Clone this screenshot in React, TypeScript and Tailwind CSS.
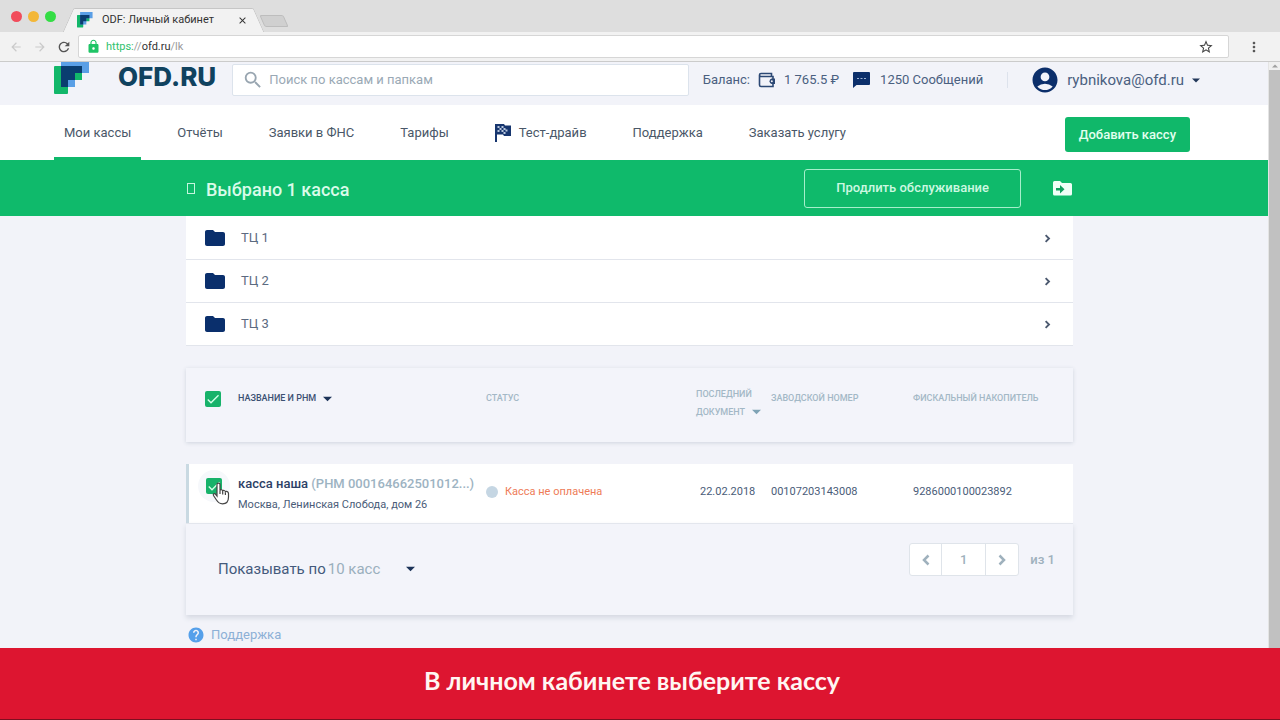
import React from 'react';
import {
  MdAccountCircle,
  MdArrowBack,
  MdArrowForward,
  MdCheck,
  MdClose,
  MdFolder,
  MdHelp,
  MdLock,
  MdMoreVert,
  MdRefresh,
  MdSearch,
  MdStarBorder,
} from 'react-icons/md';

const navItems = [
  { title: 'Мои кассы', active: true },
  { title: 'Отчёты' },
  { title: 'Заявки в ФНС' },
  { title: 'Тарифы' },
  { title: 'Тест-драйв', flag: true },
  { title: 'Поддержка' },
  { title: 'Заказать услугу' },
];

const folders = ['ТЦ 1', 'ТЦ 2', 'ТЦ 3'];

const LogoMark: React.FC<{ className: string; viewBox: string }> = ({ className, viewBox }) => (
  <svg className={className} viewBox={viewBox} aria-hidden="true">
    <path d="M1 4H28V18H14V31a1 1 0 0 1-1 1H1a1 1 0 0 1-1-1V5a1 1 0 0 1 1-1Z" fill="#12b76a" />
    <path d="M7-3H35V11H21V25H7Z" fill="#5a9fe6" />
    <path d="M7 4H28V11H21V18H14V25H7Z" fill="#0a3d70" />
  </svg>
);

const Caret: React.FC<{ className: string }> = ({ className }) => (
  <svg className={className} viewBox="0 0 10 6" aria-hidden="true">
    <path d="M0 0.5H10L5 5.5Z" fill="currentColor" />
  </svg>
);

const Chevron: React.FC<{ className: string; left?: boolean }> = ({ className, left }) => (
  <svg className={className} viewBox="0 0 8 12" fill="none" aria-hidden="true">
    <path d={left ? 'M6.5 1.5L2 6L6.5 10.5' : 'M1.5 1.5L6 6L1.5 10.5'} stroke="currentColor" strokeWidth="2.5" />
  </svg>
);

const WalletIcon = () => (
  <svg className="h-4 w-[18px]" viewBox="0 0 18 16" fill="none" aria-hidden="true">
    <path d="M1.5 3V13a1.5 1.5 0 0 0 1.5 1.5H15V4.5H3a1.5 1.5 0 0 1 0-3H13.5V4" stroke="#2c4874" strokeWidth="1.6" />
    <path d="M17 6.5H13.5a2.900 2.900 0 0 0 0 5.500H17Z" fill="#2c4874" />
    <circle cx="13.800" cy="9.200" r="1" fill="#f2f3f9" />
  </svg>
);

const MessageIcon = () => (
  <svg className="h-4 w-[17px]" viewBox="0 0 17 16" aria-hidden="true">
    <path d="M1 0H16a1 1 0 0 1 1 1V12a1 1 0 0 1-1 1H3.500L0 16V1a1 1 0 0 1 1-1Z" fill="#0c2f6b" />
    <path d="M4 6.500H6M7.500 6.500H9.500M11 6.500H13" stroke="#9fb4d4" strokeWidth="1.200" />
  </svg>
);

const FlagIcon = () => (
  <svg className="h-[18px] w-4" viewBox="0 0 16 18" aria-hidden="true">
    <path d="M0 0H9L10 1.500H16V12H9L8 10.500H2V18H0Z" fill="#17366f" />
    <path
      d="M2.500 2h2v2h-2zM6.500 2h2v2h-2zM4.500 4h2v2h-2zM8.500 4h2v2h-2zM2.500 6h2v2h-2zM6.500 6h2v2h-2zM10.500 5.500h2v2h-2zM8.500 8h2v2h-2z"
      fill="#b9c7de"
    />
  </svg>
);

const MoveFolderIcon = () => (
  <svg className="h-[15px] w-[19px]" viewBox="0 0 19 15" aria-hidden="true">
    <path d="M1.500 0H7L9 2H17.500A1.500 1.500 0 0 1 19 3.500V13A1.500 1.500 0 0 1 17.500 14.500H1.500A1.500 1.500 0 0 1 0 13V1.500A1.500 1.500 0 0 1 1.500 0Z" fill="#effff7" />
    <path d="M3 7H7V4L11.500 8.300L7 12.500V9.600H3Z" fill="#0f9f5d" />
  </svg>
);

const HandCursor = () => (
  <svg className="h-[23px] w-[18px]" viewBox="0 0 18 23" aria-hidden="true">
    <path
      d="M5 14V2.500C5 .6 8 .6 8 2.500V8.500C8.300 7.300 10.600 7.500 10.700 9C11.200 8 13.300 8.300 13.400 9.800C14.200 9 16.500 9.500 16.500 11.500V15C16.500 19.500 14 21.800 10.500 21.800C7.500 21.800 6 20.500 4.500 18L1.500 13.500C.7 12 2.500 11 3.600 12.300Z"
      fill="#fff"
      stroke="#444"
      strokeWidth="1.200"
    />
    <path d="M8 8.500V12M10.700 9.500V12.500M13.400 10.500V13" stroke="#444" strokeWidth="1.200" />
  </svg>
);

const GreenCheckbox: React.FC<{ label: string }> = ({ label }) => (
  <span className="grid h-4 w-4">
    <input
      type="checkbox"
      defaultChecked
      aria-label={label}
      className="col-start-1 row-start-1 h-4 w-4 appearance-none rounded-xs bg-[#17b26a]"
    />
    <MdCheck className="pointer-events-none col-start-1 row-start-1 h-4 w-4 text-[#d5ffe9]" />
  </span>
);

const BrowserBar = () => (
  <header>
    <div className="flex h-8 items-end bg-[#dedede]">
      <div className="flex h-8 items-center gap-[6px] pl-[11px]">
        <span className="h-[11px] w-[11px] rounded-full bg-[#f14c5b]" />
        <span className="h-[11px] w-[11px] rounded-full bg-[#f3b738]" />
        <span className="h-[11px] w-[11px] rounded-full bg-[#34dd45]" />
      </div>
      <div className="relative ml-3 flex h-6 w-[190px] items-center">
        <span className="absolute inset-y-0 left-0 w-3/4 -skew-x-[24deg] rounded-tl-xs border-t border-l border-[#c6c6c6] bg-[#f2f2f2]" />
        <span className="absolute inset-y-0 right-0 w-3/4 skew-x-[24deg] rounded-tr-xs border-t border-r border-[#c6c6c6] bg-[#f2f2f2]" />
        <div className="relative flex w-full items-center pr-[10px] pl-[9px]">
          <LogoMark className="h-4 w-4" viewBox="0 -3 36 36" />
          <span className="ml-[9px] flex-1 text-[11px] text-[#333]">ODF: Личный кабинет</span>
          <button type="button" aria-label="Закрыть вкладку">
            <MdClose className="h-[11px] w-[11px] text-[#333]" />
          </button>
        </div>
      </div>
      <span className="mb-[5px] ml-1 h-3 w-6 skew-x-[24deg] rounded-xs border border-[#bdbdbd] bg-[#d0d0d0]" />
    </div>
    <div className="flex h-[30px] items-center border-b border-[#cbcbcb] bg-[#f2f2f2] pr-[18px] pl-[9px]">
      <button type="button" aria-label="Назад">
        <MdArrowBack className="h-[14px] w-[14px] text-[#cacaca]" />
      </button>
      <button type="button" aria-label="Вперёд" className="ml-[10px]">
        <MdArrowForward className="h-[14px] w-[14px] text-[#cacaca]" />
      </button>
      <button type="button" aria-label="Обновить" className="ml-[9px]">
        <MdRefresh className="h-4 w-4 text-[#555]" />
      </button>
      <div className="ml-[6px] flex h-[23px] flex-1 items-center rounded-xs border border-[#d6d6d6] bg-white pr-[14px] pl-[7px]">
        <MdLock className="h-[15px] w-[15px] text-[#1fc466]" />
        <p className="ml-[5px] flex-1 pt-[2px] text-[11px] text-[#9a9a9a]">
          <span className="text-[#2fc26e]">https:</span>//<span className="text-[#333]">ofd.ru</span>/lk
        </p>
        <MdStarBorder className="h-4 w-4 text-[#444]" />
      </div>
      <button type="button" aria-label="Меню" className="ml-[17px]">
        <MdMoreVert className="h-4 w-4 text-[#555]" />
      </button>
    </div>
  </header>
);

const AccountHeader = () => (
  <div className="flex h-[43px] items-start bg-[#f2f3f9] pr-[68px] pl-[54px]">
    <LogoMark className="h-8 w-9" viewBox="0 0 36 32" />
    <span className="ml-7 font-[Inter] text-[26px] leading-[30px] font-extrabold text-[#10425f]">OFD.RU</span>
    <div className="mt-[2px] ml-4 flex h-8 flex-1 items-center rounded-xs border border-[#dce3ec] bg-white pl-[9px]">
      <MdSearch className="h-[22px] w-[22px] text-[#98a5b0]" />
      <input
        type="search"
        aria-label="Поиск"
        placeholder="Поиск по кассам и папкам"
        className="ml-[5px] flex-1 text-[13px] outline-none placeholder:text-[#9aa9b5]"
      />
    </div>
    <div className="mt-[2px] ml-[14px] flex h-8 items-center text-[13px] whitespace-nowrap text-[#4a6080]">
      <span className="mr-2">Баланс:</span>
      <WalletIcon />
      <span className="ml-2">1 765.5 ₽</span>
      <span className="ml-[14px]">
        <MessageIcon />
      </span>
      <span className="ml-[10px]">1250 Сообщений</span>
      <span className="ml-6 h-4 w-px bg-[#dde2ec]" />
      <MdAccountCircle className="ml-[22px] h-[30px] w-[30px] text-[#0c2f6b]" />
      <button type="button" className="ml-[7px] flex items-center gap-2 text-[15px]">
        rybnikova@ofd.ru
        <Caret className="h-[5px] w-2 text-[#22375a]" />
      </button>
    </div>
  </div>
);

const MainNav = () => (
  <div className="flex h-[55px] items-stretch justify-between bg-white pr-[78px] pl-[54px]">
    <nav className="flex gap-[26px]">
      {navItems.map((item) => (
        <a
          key={item.title}
          href="#"
          className={
            item.active
              ? 'flex items-center gap-2 border-b-[3px] border-[#0fb96b] px-[10px] pt-[3px] text-[13px] text-[#4a5768]'
              : 'flex items-center gap-2 border-b-[3px] border-transparent px-[10px] pt-[3px] text-[13px] text-[#4a5768]'
          }
        >
          {item.flag && <FlagIcon />}
          {item.title}
        </a>
      ))}
    </nav>
    <button type="button" className="mt-3 h-[35px] rounded-[3px] bg-[#10b86a] px-[14px] text-[13px] font-medium text-[#e2ffef]">
      Добавить кассу
    </button>
  </div>
);

const SelectionBar = () => (
  <div className="h-14 bg-[#0fba6b] pr-[9px]">
    <div className="mx-auto flex h-14 max-w-[887px] items-center">
      <span className="ml-px h-[11px] w-2 border border-[#c5f5de]" />
      <h1 className="ml-[11px] flex-1 pt-[2px] text-[18px] font-medium text-[#d9fbe9]">Выбрано 1 касса</h1>
      <button
        type="button"
        className="h-[39px] rounded-[3px] border border-[#a5efcb] px-[31px] text-[13px] font-medium text-[#ccf8e1]"
      >
        Продлить обслуживание
      </button>
      <button type="button" aria-label="Переместить в папку" className="mr-px ml-8">
        <MoveFolderIcon />
      </button>
    </div>
  </div>
);

const CashTable = () => (
  <table className="-mb-[22px] w-full table-fixed border-separate border-spacing-x-0 border-spacing-y-[22px] text-left">
    <colgroup>
      <col className="w-[52px]" />
      <col className="w-[248px]" />
      <col />
      <col className="w-[75px]" />
      <col className="w-[142px]" />
      <col className="w-[160px]" />
    </colgroup>
    <thead>
      <tr className="h-[74px] bg-[#f3f4fa] text-[9px] text-[#a3b8c6] shadow-[0_1px_4px_#cfd4de]">
        <th className="pb-3 pl-[19px]">
          <GreenCheckbox label="Выбрать все" />
        </th>
        <th className="pb-3 font-medium text-[#3b5073]">
          <span className="flex items-center gap-[7px]">
            НАЗВАНИЕ И РНМ
            <Caret className="h-[6px] w-[9px] text-[#1c3358]" />
          </span>
        </th>
        <th className="pb-3 font-medium">СТАТУС</th>
        <th className="pb-1 leading-[18px] font-medium">
          ПОСЛЕДНИЙ
          <span className="flex items-center gap-[7px]">
            ДОКУМЕНТ
            <Caret className="h-[6px] w-[9px] text-[#7fa3b5]" />
          </span>
        </th>
        <th className="pb-3 font-medium">ЗАВОДСКОЙ НОМЕР</th>
        <th className="pb-3 font-medium">ФИСКАЛЬНЫЙ НАКОПИТЕЛЬ</th>
      </tr>
    </thead>
    <tbody>
      <tr className="h-[59px] bg-white text-[11px] text-[#4a5c78]">
        <td className="border-l-[3px] border-[#c9d9e2] pb-4 pl-[9px]">
          <div className="relative">
            <div className="grid h-8 w-8 place-items-center rounded-full bg-[#f6f8fb]">
              <GreenCheckbox label="касса наша" />
            </div>
            <div className="pointer-events-none absolute top-3 left-[14px]">
              <HandCursor />
            </div>
          </div>
        </td>
        <td className="whitespace-nowrap">
          <p className="text-[13px] leading-[21px] font-medium text-[#2d4166]">
            касса наша <span className="text-[#9db3c2]">(РНМ 000164662501012...)</span>
          </p>
          <p className="leading-[21px]">Москва, Ленинская Слобода, дом 26</p>
        </td>
        <td className="pb-[3px] text-[#ee7c58]">
          <span className="flex items-center gap-[7px]">
            <span className="h-3 w-3 rounded-full bg-[#c5d6e3]" />
            Касса не оплачена
          </span>
        </td>
        <td className="pb-[3px] pl-1">22.02.2018</td>
        <td className="pb-[3px]">00107203143008</td>
        <td className="pb-[3px]">9286000100023892</td>
      </tr>
    </tbody>
  </table>
);

const TableFooter = () => (
  <div className="flex h-[92px] items-start justify-between border-t border-[#e3e6ed] bg-[#f3f4fa] pr-[18px] pl-8 shadow-[0_3px_5px_#d5d9e2]">
    <div className="mt-[33px] flex items-center text-[15px] leading-6">
      <label htmlFor="page-size" className="text-[#445a7c]">
        Показывать по
      </label>
      <div className="ml-[2px] grid items-center">
        <select
          id="page-size"
          className="col-start-1 row-start-1 appearance-none bg-transparent pr-[34px] text-[#9aafbd] outline-none"
        >
          <option>10 касс</option>
        </select>
        <Caret className="pointer-events-none col-start-1 row-start-1 h-[6px] w-[9px] justify-self-end text-[#1c3358]" />
      </div>
    </div>
    <div className="mt-[19px] flex items-center text-[13px] font-medium text-[#9fb1bd]">
      <div className="flex h-[33px] divide-x divide-[#dfe4ea] rounded-[3px] border border-[#dfe4ea] bg-white">
        <button type="button" aria-label="Предыдущая" className="grid w-8 place-items-center">
          <Chevron left className="h-3 w-2" />
        </button>
        <button type="button" className="w-11">
          1
        </button>
        <button type="button" aria-label="Следующая" className="grid w-8 place-items-center">
          <Chevron className="h-3 w-2" />
        </button>
      </div>
      <span className="ml-[11px]">из 1</span>
    </div>
  </div>
);

const App: React.FC = () => (
  <div className="flex min-h-screen flex-col bg-[#f2f3f9] font-[Roboto,sans-serif]">
    <BrowserBar />
    <div className="flex flex-1">
      <div className="flex-1">
        <AccountHeader />
        <MainNav />
        <SelectionBar />
        <main className="pr-[9px]">
          <div className="mx-auto max-w-[887px]">
            <ul className="bg-white pt-px">
              {folders.map((name) => (
                <li key={name} className="border-b border-[#e2e5ec]">
                  <a href="#" className="flex h-[42px] items-center pr-[22px] pl-[17px] text-[13px] text-[#5b6a80]">
                    <MdFolder className="h-6 w-6 text-[#0a2f6c]" />
                    <span className="ml-[14px] flex-1">{name}</span>
                    <Chevron className="h-[9px] w-[7px] text-[#4c5a70]" />
                  </a>
                </li>
              ))}
            </ul>
            <CashTable />
            <TableFooter />
            <a href="#" className="mt-[10px] flex items-center gap-[6px] pl-px text-[13px] text-[#8db0d6]">
              <MdHelp className="h-[18px] w-[18px] text-[#55a0ea]" />
              Поддержка
            </a>
          </div>
        </main>
      </div>
      <div className="flex w-3 flex-col border-l border-[#e4e4e4] bg-[#c1c1c1]">
        <div className="grid h-2 place-items-center bg-[#f0f0f0]">
          <Caret className="h-1 w-[6px] rotate-180 text-[#a0a0a0]" />
        </div>
      </div>
    </div>
    <footer className="grid h-[72px] place-items-center border-b border-[#7d0f20] bg-[#dd1530] pr-4 pb-2">
      <p className="font-[Lato] text-[25px] leading-8 font-bold text-[#fff6f2]">В личном кабинете выберите кассу</p>
    </footer>
  </div>
);

export default App;
